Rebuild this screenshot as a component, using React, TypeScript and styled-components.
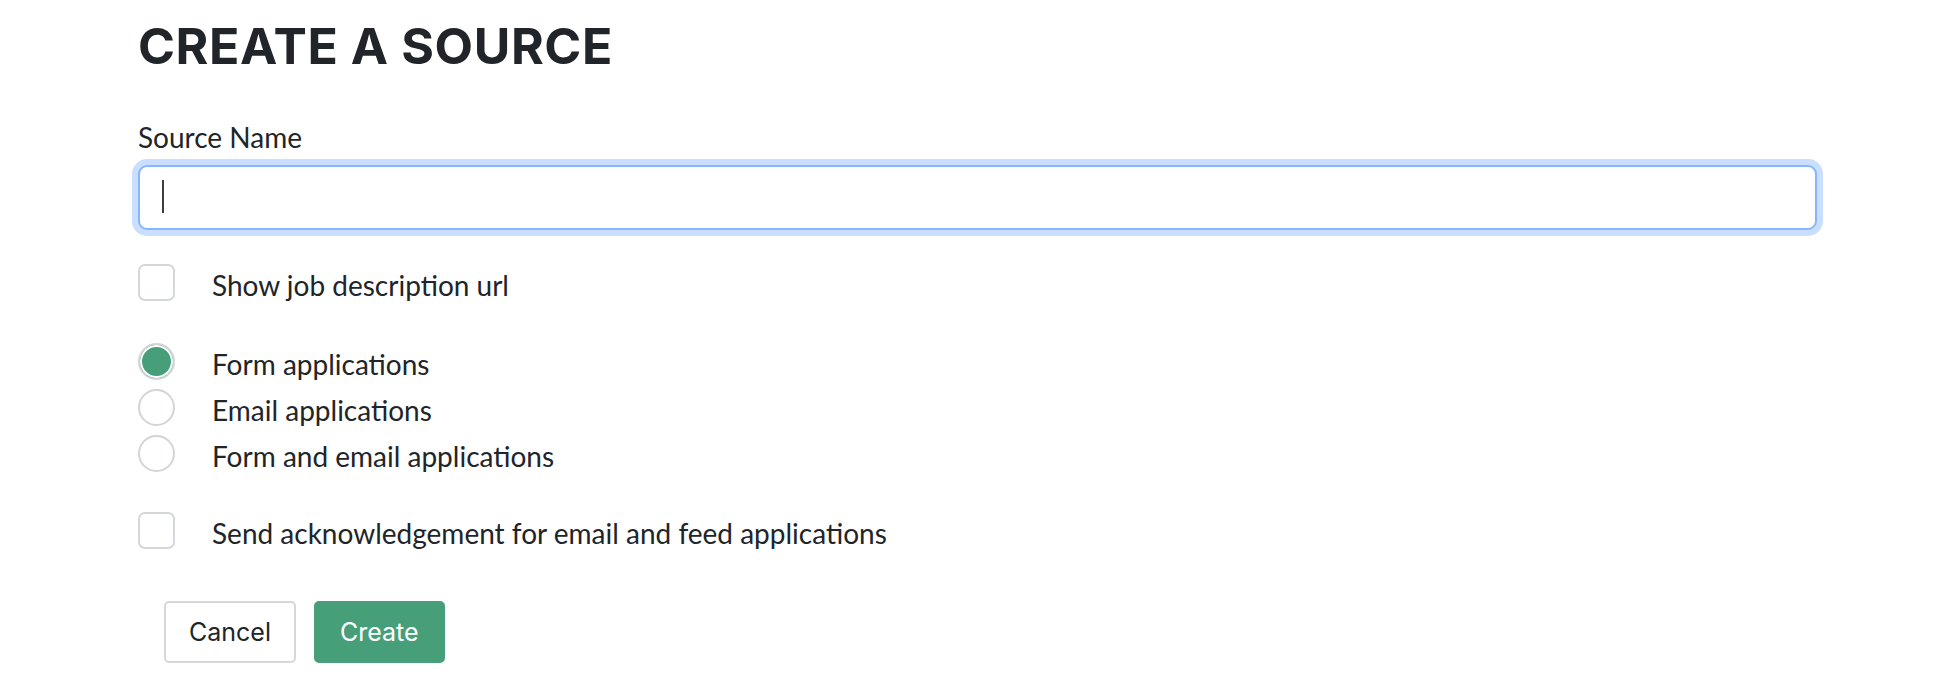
import React, { useState } from "react";
import styled, { createGlobalStyle } from "styled-components";

const Global = createGlobalStyle`
  html, body { margin: 0; padding: 0; background: #ffffff; }
  body { font-family: Lato, "Open Sans", sans-serif; color: #212529; }
  * { box-sizing: border-box; }
`;

const Page = styled.div`
  padding: 14px 137px 0 138px;
`;

const Title = styled.h1`
  margin: 0;
  font-family: Inter, "Open Sans", sans-serif;
  font-weight: 700;
  font-size: 50px;
  line-height: 64px;
  color: #212529;
  letter-spacing: 0.6px;
`;

const Field = styled.div`
  margin-top: 42px;
  display: flex;
  flex-direction: column;
  gap: 11px;
`;

const Label = styled.label`
  font-size: 28px;
  line-height: 34px;
`;

const TextInput = styled.input`
  display: block;
  width: 100%;
  height: 65px;
  border: 2px solid #86b7fe;
  border-radius: 9px;
  box-shadow: 0 0 0 6px rgba(13, 110, 253, 0.22);
  outline: none;
  padding: 0 22px;
  font-family: Lato, sans-serif;
  font-size: 28px;
  color: #212529;
  caret-color: #212529;
`;

const Caret = styled.span`
  position: absolute;
  left: 24px;
  top: 15px;
  width: 2px;
  height: 33px;
  background: #3a3f44;
`;

const InputWrap = styled.div`
  position: relative;
`;

const OptionRow = styled.label<{ $mt?: number }>`
  display: flex;
  align-items: center;
  gap: 37px;
  height: 37px;
  margin-top: ${(p) => p.$mt ?? 0}px;
  font-size: 28px;
  line-height: 34px;
  cursor: pointer;
`;

const OptionText = styled.span`
  padding-top: 5px;
`;

const Box = styled.span`
  width: 37px;
  height: 37px;
  flex: 0 0 37px;
  border: 2px solid #d4d7d9;
  border-radius: 7px;
  background: #fff;
`;

const Radio = styled.span<{ $on?: boolean }>`
  width: 37px;
  height: 37px;
  flex: 0 0 37px;
  border: 2px solid #d2d5d7;
  border-radius: 50%;
  background: ${(p) => (p.$on ? "#479f79" : "#fff")};
  box-shadow: ${(p) => (p.$on ? "inset 0 0 0 2px #fff" : "none")};
`;

const RadioGroup = styled.div`
  margin-top: 42px;
  display: flex;
  flex-direction: column;
  gap: 9px;
`;

const Actions = styled.div`
  display: flex;
  gap: 18px;
  margin-top: 52px;
  padding-left: 26px;
`;

const Button = styled.button<{ $primary?: boolean }>`
  height: 62px;
  padding: 0 ${(p) => (p.$primary ? 24 : 23)}px;
  border-radius: 5px;
  font-family: Inter, "Open Sans", sans-serif;
  font-size: 25px;
  font-weight: 400;
  border: 2px solid ${(p) => (p.$primary ? "#479f79" : "#d5d8da")};
  background: ${(p) => (p.$primary ? "#479f79" : "#fff")};
  color: ${(p) => (p.$primary ? "#fff" : "#212529")};
  cursor: pointer;
`;

export default function App() {
  const [choice, setChoice] = useState(0);
  const radios = ["Form applications", "Email applications", "Form and email applications"];
  return (
    <>
      <Global />
      <Page>
        <Title>CREATE A SOURCE</Title>
        <Field>
          <Label>Source Name</Label>
          <InputWrap>
            <TextInput />
            <Caret />
          </InputWrap>
        </Field>
        <OptionRow $mt={34}>
          <Box />
          <OptionText>Show job description url</OptionText>
        </OptionRow>
        <RadioGroup>
          {radios.map((r, i) => (
            <OptionRow key={r} onClick={() => setChoice(i)}>
              <Radio $on={choice === i} />
              <OptionText>{r}</OptionText>
            </OptionRow>
          ))}
        </RadioGroup>
        <OptionRow $mt={40}>
          <Box />
          <OptionText>Send acknowledgement for email and feed applications</OptionText>
        </OptionRow>
        <Actions>
          <Button>Cancel</Button>
          <Button $primary>Create</Button>
        </Actions>
      </Page>
    </>
  );
}
